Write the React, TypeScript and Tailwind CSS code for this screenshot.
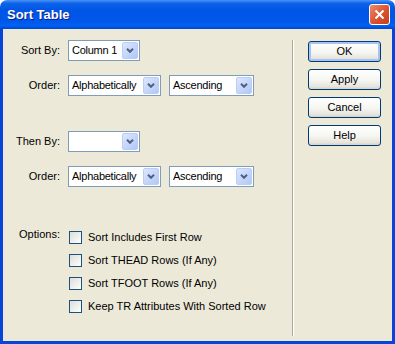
import React from 'react';

const font = "font-['Liberation_Sans',Arial,sans-serif]";

const Chevron: React.FC = () => (
  <svg width="8" height="5" viewBox="0 0 8 5">
    <path d="M1 0.8 L4 3.8 L7 0.8" fill="none" stroke="#4D6185" strokeWidth="2" />
  </svg>
);

const Combo: React.FC<{ value: string; width: string }> = ({ value, width }) => (
  <div className={`flex h-[21px] shrink-0 items-center border border-[#7F9DB9] bg-white p-px ${width}`}>
    <span className="flex-1 overflow-hidden whitespace-nowrap pl-[2px] text-[11px] leading-[13px] tracking-[-0.25px] text-black">
      {value}
    </span>
    <div className="flex h-[17px] w-[16px] shrink-0 items-center justify-center rounded-[2px] border border-[#B9CDF6] bg-[linear-gradient(135deg,#DDE7FD,#B1C7F5)]">
      <Chevron />
    </div>
  </div>
);

const Checkbox: React.FC = () => (
  <div className="h-[13px] w-[13px] shrink-0 border border-[#1C5180] bg-[linear-gradient(135deg,#DCDCD7,#FFFFFF)]" />
);

const Button: React.FC<{ label: string; primary?: boolean }> = ({ label, primary }) => (
  <button
    className={`flex h-[21px] w-[73px] items-center justify-center rounded-[3px] border border-[#003C74] bg-[linear-gradient(to_bottom,#FFFFFF_0%,#F5F5F1_55%,#E6E3DA_88%,#D6D0C5_100%)] text-[11px] leading-[13px] text-black ${
      primary ? 'shadow-[inset_0_0_0_2px_#A9C3F4]' : ''
    }`}
  >
    {label}
  </button>
);

const labelCls = 'w-[65px] shrink-0 pr-[8px] text-right text-[11px] leading-[13px] text-black';

const options = [
  'Sort Includes First Row',
  'Sort THEAD Rows (If Any)',
  'Sort TFOOT Rows (If Any)',
  'Keep TR Attributes With Sorted Row',
];

const App: React.FC = () => {
  return (
    <div className={`${font} flex h-[344px] w-[395px] flex-col bg-white`}>
      {/* Title bar */}
      <div className="flex h-[29px] shrink-0 items-center rounded-t-[7px] bg-[linear-gradient(to_bottom,#4A93F5_0%,#0C62E9_12%,#0055E5_35%,#0057EA_75%,#0062F2_88%,#0046CF_100%)] pl-[7px] pr-[5px]">
        <span className="flex-1 text-[13px] font-bold leading-none text-white [text-shadow:1px_1px_0_#0A1E8C]">
          Sort Table
        </span>
        <div className="flex h-[21px] w-[21px] items-center justify-center rounded-[3px] border border-white bg-[linear-gradient(135deg,#EC8D6E,#D9512F_55%,#C53E1E)]">
          <svg width="11" height="11" viewBox="0 0 11 11">
            <path d="M1.5 1.5 L9.5 9.5 M9.5 1.5 L1.5 9.5" stroke="#FFFFFF" strokeWidth="2" />
          </svg>
        </div>
      </div>

      {/* Body */}
      <div className="flex flex-1 border-x-[3px] border-b-[3px] border-[#0843DA] bg-[#ECE9D8]">
        {/* Left form */}
        <div className="flex w-[289px] flex-col pt-[11px]">
          <div className="flex items-center">
            <span className={labelCls}>Sort By:</span>
            <Combo value="Column 1" width="w-[72px]" />
          </div>
          <div className="mt-[14px] flex items-center">
            <span className={labelCls}>Order:</span>
            <Combo value="Alphabetically" width="w-[93px]" />
            <div className="ml-[8px]">
              <Combo value="Ascending" width="w-[85px]" />
            </div>
          </div>
          <div className="mt-[35px] flex items-center">
            <span className={labelCls}>Then By:</span>
            <Combo value="" width="w-[72px]" />
          </div>
          <div className="mt-[14px] flex items-center">
            <span className={labelCls}>Order:</span>
            <Combo value="Alphabetically" width="w-[93px]" />
            <div className="ml-[8px]">
              <Combo value="Ascending" width="w-[85px]" />
            </div>
          </div>

          {/* Options */}
          <div className="mt-[39px] flex">
            <span className={`${labelCls} pt-[2px]`}>Options:</span>
            <div className="ml-px flex flex-col">
              {options.map((o) => (
                <div key={o} className="flex h-[23px] items-center gap-[6px]">
                  <Checkbox />
                  <span className="text-[11px] leading-[13px] text-black">{o}</span>
                </div>
              ))}
            </div>
          </div>
        </div>

        {/* Separator */}
        <div className="mb-[5px] mt-[11px] w-[2px] border-l border-r border-l-[#ACA899] border-r-white" />

        {/* Buttons */}
        <div className="flex flex-col gap-[7px] pl-[14px] pt-[12px]">
          <Button label="OK" primary />
          <Button label="Apply" />
          <Button label="Cancel" />
          <Button label="Help" />
        </div>
      </div>
    </div>
  );
};

export default App;
